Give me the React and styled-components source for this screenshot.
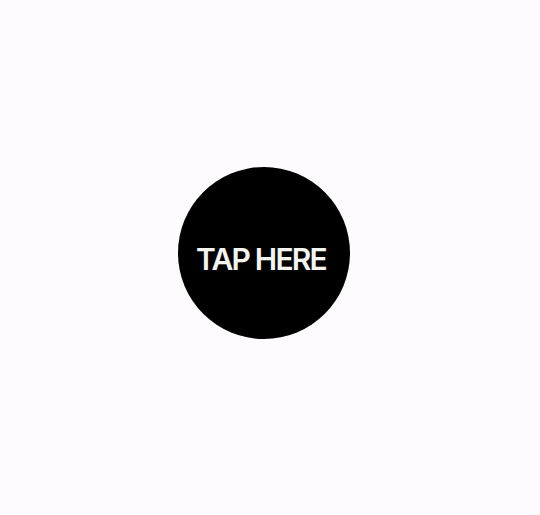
import React from 'react';
import styled, { createGlobalStyle } from 'styled-components';

const GlobalStyle = createGlobalStyle`
  html, body {
    margin: 0;
    padding: 0;
    background: #fdfbfd;
  }
`;

const Page = styled.div`
  height: 515px;
  display: flex;
  justify-content: center;
  align-items: center;
  padding: 0 12px 10px 0;
  box-sizing: border-box;
`;

const TapButton = styled.button`
  width: 172px;
  height: 172px;
  border-radius: 50%;
  border: none;
  background: #000;
  color: #f4f4f0;
  font-family: Inter, 'Noto Sans', sans-serif;
  font-weight: 600;
  font-size: 30px;
  letter-spacing: -1.8px;
  display: flex;
  align-items: center;
  justify-content: center;
  padding: 13px 6px 0 0;
  cursor: pointer;
`;

export default function App() {
  return (
    <>
      <GlobalStyle />
      <Page>
        <TapButton>TAP HERE</TapButton>
      </Page>
    </>
  );
}
